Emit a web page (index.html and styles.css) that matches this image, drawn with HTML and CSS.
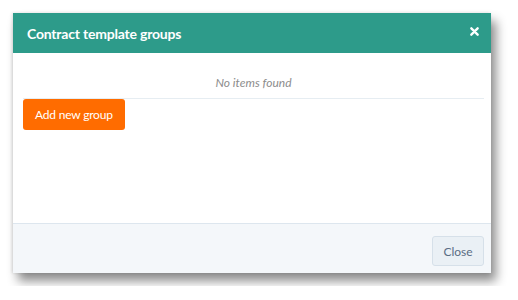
FILE: index.html
```html
<!DOCTYPE html>
<html lang="en">
<head>
  <meta charset="UTF-8">
  <title>Contract template groups</title>
  <link rel="stylesheet" href="styles.css">
</head>
<body>
  <div class="dialog" role="dialog" aria-labelledby="dialogTitle">
    <div class="dialog-header">
      <h2 id="dialogTitle">Contract template groups</h2>
      <a class="close-icon" aria-label="Close">
        <svg width="9" height="9" viewBox="0 0 10 10"><path d="M1.5 1.5 L8.5 8.5 M8.5 1.5 L1.5 8.5" stroke="#fff" stroke-width="2.6" stroke-linecap="round"/></svg>
      </a>
    </div>
    <div class="dialog-body">
      <div class="empty">No items found</div>
      <button class="btn-add">Add new group</button>
    </div>
    <div class="dialog-footer">
      <button class="btn-close">Close</button>
    </div>
  </div>
</body>
</html>
```

FILE: styles.css
```css
body {
  margin: 0;
  padding: 13px;
  font-family: Lato, "Open Sans", sans-serif;
  background: #fff;
}
.dialog {
  width: 478px;
  height: 260px;
  display: flex;
  flex-direction: column;
  background: #fff;
  box-shadow: 5px 8px 10px rgba(0, 0, 0, 0.45), -1px 0 3px rgba(0, 0, 0, 0.12);
}
.dialog-header {
  height: 40px;
  background: #2d9b8a;
  display: flex;
  align-items: center;
  justify-content: space-between;
  padding: 0 12px 0 14px;
}
.dialog-header h2 {
  margin: 0;
  color: #fff;
  font-size: 14px;
  font-weight: 700;
  letter-spacing: -0.2px;
}
.close-icon {
  display: flex;
  cursor: pointer;
  margin-top: -4px;
}
.dialog-body {
  flex: 1;
  padding: 0 7px 0 10px;
}
.empty {
  height: 46px;
  box-sizing: border-box;
  padding-top: 19px;
  line-height: 22px;
  text-align: center;
  font-style: italic;
  font-size: 12px;
  color: #8c8c8c;
  border-bottom: 1px solid #e6edf2;
}
.btn-add {
  height: 31px;
  padding: 0 12px;
  border: none;
  border-radius: 3px;
  background: #ff6c00;
  color: #fff;
  font-family: inherit;
  font-size: 12px;
  letter-spacing: -0.2px;
  cursor: pointer;
}
.dialog-footer {
  height: 49px;
  background: #f4f7fa;
  border-top: 1px solid #dde6ee;
  display: flex;
  align-items: center;
  justify-content: flex-end;
  padding: 0 7px;
}
.btn-close {
  width: 52px;
  height: 30px;
  margin-top: 5px;
  background: #eaf0f5;
  border: 1px solid #d6e0e9;
  border-radius: 3px;
  color: #5a6d84;
  font-family: inherit;
  font-size: 12px;
  cursor: pointer;
}
```
